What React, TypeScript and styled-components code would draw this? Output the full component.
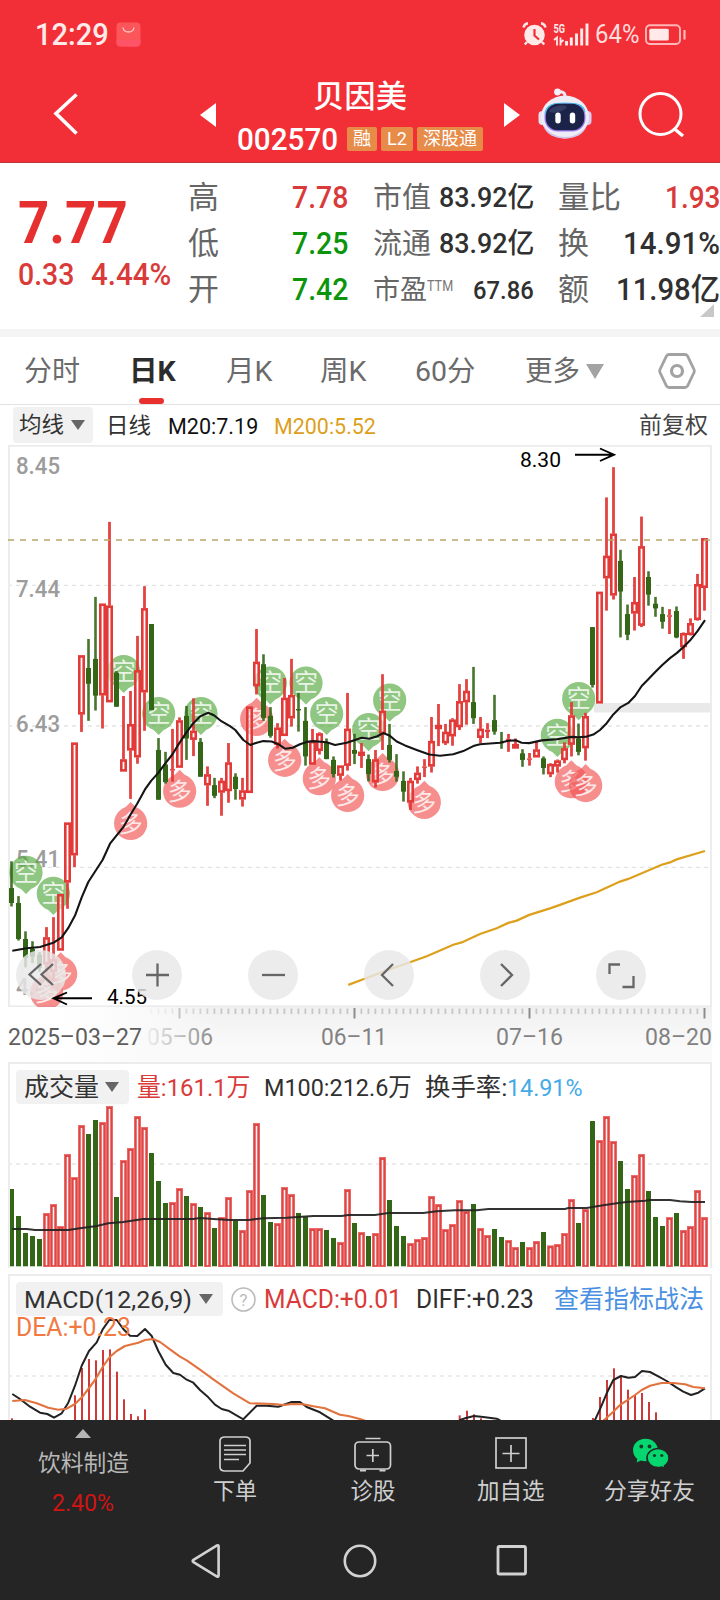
import React, { useLayoutEffect, useRef, useState } from "react";
import styled, { createGlobalStyle, css } from "styled-components";

const RED = "#d93a3a";
const UP = "#e23a38";
const DOWN = "#336617";
const SANS = `Roboto, "Noto Sans CJK SC", sans-serif`;

const Global = createGlobalStyle`
  * { box-sizing: border-box; }
  body { margin: 0; background: #fff; font-family: ${SANS}; color: #333; }
  svg { display: block; }
`;

/* ---------- text that condenses to the width of its slot ---------- */

const Slot = styled.span<{ $w: number; $size: number; $color?: string; $weight?: number; $dy?: number }>`
  display: block;
  flex: none;
  width: ${(p) => p.$w}px;
  font-size: ${(p) => p.$size}px;
  line-height: 1.2;
  font-weight: ${(p) => p.$weight ?? 400};
  color: ${(p) => p.$color ?? "inherit"};
  white-space: nowrap;
  margin-top: ${(p) => p.$dy ?? 0}px;
`;
const Squeeze = styled.span`
  display: inline-block;
  transform-origin: 0 50%;
`;

type FitProps = { w: number; size: number; color?: string; weight?: number; dy?: number; children: React.ReactNode };
function Fit({ w, size, color, weight, dy, children }: FitProps) {
  const ref = useRef<HTMLSpanElement>(null);
  const [k, setK] = useState(1);
  useLayoutEffect(() => {
    if (ref.current && ref.current.offsetWidth) setK(w / ref.current.offsetWidth);
  }, [w, size, children]);
  return (
    <Slot $w={w} $size={size} $color={color} $weight={weight} $dy={dy}>
      <Squeeze ref={ref} style={{ transform: `scaleX(${k})` }}>{children}</Squeeze>
    </Slot>
  );
}

/* ---------- layout parts ---------- */

const Screen = styled.main`
  width: 720px;
  height: 1600px;
  overflow: hidden;
  display: flex;
  flex-direction: column;
  background: #fff;
`;
const Header = styled.header`
  height: 163px;
  flex: none;
  background: #f22f37;
  border-bottom: 1px solid #b8383c;
  color: #fff;
`;
const StatusBar = styled.div`
  height: 68px;
  padding: 1px 33px 0 35px;
  display: flex;
  align-items: center;
  justify-content: space-between;
`;
const Cluster = styled.div<{ $gap: number }>`
  display: flex;
  align-items: center;
  gap: ${(p) => p.$gap}px;
`;
const TitleBar = styled.div`
  height: 94px;
  display: grid;
  grid-template-columns: 200px 34px 254px 16px 34px 54px 46px 46px;
  align-items: start;
`;
const TitleCell = styled.div<{ $top: number; $left?: number }>`
  padding-top: ${(p) => p.$top}px;
  padding-left: ${(p) => p.$left ?? 0}px;
`;
const TitleBlock = styled.div`
  display: flex;
  flex-direction: column;
`;
const NameLine = styled.div`
  padding: 10px 0 0 79px;
  height: 52px;
`;
const CodeLine = styled.div`
  display: flex;
  align-items: center;
  height: 38px;
  padding-left: 3px;
`;
const Tag = styled.span<{ $w: number; $ml: number }>`
  width: ${(p) => p.$w}px;
  margin-left: ${(p) => p.$ml}px;
  height: 24px;
  line-height: 23px;
  text-align: center;
  border-radius: 2px;
  background: #e68b48;
  font-size: 18px;
  white-space: nowrap;
`;

const Quote = styled.section`
  position: relative;
  height: 166px;
  flex: none;
  display: grid;
  grid-template-columns: 188px 160px 25px 161px 24px 162px;
  padding-top: 12px;
`;
const PriceBlock = styled.div`
  padding: 13px 0 0 18px;
`;
const Change = styled.div`
  display: flex;
  gap: 17px;
`;
const StatColumn = styled.div`
  display: flex;
  flex-direction: column;
`;
const StatRow = styled.div`
  height: 46px;
  display: flex;
  align-items: center;
  justify-content: space-between;
`;
const Corner = styled.i`
  position: absolute;
  right: 6px;
  bottom: 12px;
  border-left: 14px solid transparent;
  border-bottom: 13px solid #c8c8c8;
`;
const Band = styled.div`
  height: 8px;
  flex: none;
  background: #f4f4f4;
`;
const Tabs = styled.nav`
  height: 68px;
  flex: none;
  display: flex;
  align-items: center;
  border-bottom: 1px solid #e2e2e2;
`;
const Tab = styled.div<{ $ml: number; $active?: boolean }>`
  position: relative;
  height: 67px;
  margin-left: ${(p) => p.$ml}px;
  padding-top: 1px;
  display: flex;
  align-items: center;
  color: #6b6b6b;
  ${(p) =>
    p.$active &&
    css`
      color: #2c2c2c;
      &::after {
        content: "";
        position: absolute;
        left: 10px;
        bottom: 0;
        width: 25px;
        height: 6px;
        border-radius: 3px;
        background: #e8312f;
      }
    `}
`;
const Caret = styled.i<{ $w: number; $h: number; $ml: number; $color: string }>`
  flex: none;
  margin-left: ${(p) => p.$ml}px;
  border-left: ${(p) => p.$w / 2}px solid transparent;
  border-right: ${(p) => p.$w / 2}px solid transparent;
  border-top: ${(p) => p.$h}px solid ${(p) => p.$color};
`;
const Legend = styled.div<{ $h: number; $left: number }>`
  display: flex;
  align-items: center;
  flex: none;
  height: ${(p) => p.$h}px;
  padding-left: ${(p) => p.$left}px;
`;
const Picker = styled.div<{ $w: number; $h: number; $pl: number }>`
  flex: none;
  display: flex;
  align-items: center;
  width: ${(p) => p.$w}px;
  height: ${(p) => p.$h}px;
  padding-left: ${(p) => p.$pl}px;
  border-radius: 4px;
  background: #f1f1f1;
  color: #333;
`;
const Gap = styled.span<{ $w: number }>`
  flex: none;
  width: ${(p) => p.$w}px;
`;
const ChartBox = styled.section<{ $h: number }>`
  position: relative;
  flex: none;
  height: ${(p) => p.$h}px;
  overflow: hidden;
`;
const Controls = styled.div`
  position: absolute;
  left: 16px;
  bottom: 7px;
  display: flex;
  gap: 66px;
`;
const RoundButton = styled.button`
  width: 50px;
  height: 50px;
  padding: 0;
  border: 0;
  border-radius: 50%;
  background: rgba(232, 232, 232, 0.82);
  display: grid;
  place-items: center;
`;
const Panel = styled.section<{ $h: number; $mt?: number }>`
  position: relative;
  flex: none;
  height: ${(p) => p.$h}px;
  margin: ${(p) => p.$mt ?? 0}px 8px 0;
  border: 2px solid #ececec;
  border-bottom: 0;
  overflow: hidden;
`;
const Plot = styled.div`
  position: absolute;
  inset: -2px 0 0 -10px;
`;
const Above = styled.div`
  position: relative;
`;

const Footer = styled.footer`
  flex: none;
  height: 180px;
  background: #252525;
  color: #cfcfcf;
`;
const Actions = styled.div`
  height: 104px;
  display: grid;
  grid-template-columns: 166px repeat(4, 138px);
`;
const Action = styled.div`
  display: flex;
  flex-direction: column;
  align-items: center;
`;
const ActionIcon = styled.div<{ $top?: number; $left?: number }>`
  height: 58px;
  padding-top: ${(p) => p.$top ?? 14}px;
  padding-left: ${(p) => p.$left ?? 0}px;
`;
const Up = styled.i`
  margin: 9px 0 12px;
  border-left: 8.5px solid transparent;
  border-right: 8.5px solid transparent;
  border-bottom: 9px solid #b5b5b5;
`;
const SystemNav = styled.div`
  height: 76px;
  display: flex;
  align-items: center;
  padding: 0 0 2px 190px;
  gap: 119px;
`;

/* ---------- market data ---------- */

// Level values grow downward from the plot's top edge.
type Candle = [dir: 0 | 1, high: number, top: number, bottom: number, low: number, vol: number];
const candles: Candle[] = [
  [0, 1101, 1171, 1210, 1219, 567], [0, 1192, 1210, 1304, 1308, 648], [0, 1284, 1304, 1354, 1378, 699],
  [0, 1310, 1330, 1350, 1367, 708], [0, 1338, 1345, 1380, 1390, 717], [1, 1273, 1300, 1370, 1390, 640],
  [1, 1247, 1357, 1390, 1412, 613], [1, 1187, 1187, 1334, 1334, 679], [1, 1000, 1000, 1156, 1225, 463],
  [1, 791, 791, 1085, 1116, 532], [1, 563, 563, 717, 763, 376], [0, 520, 596, 637, 734, 402],
  [0, 410, 572, 668, 707, 360], [1, 428, 428, 667, 754, 367], [1, 214, 433, 685, 685, 319],
  [0, 604, 608, 697, 697, 591], [1, 669, 835, 866, 866, 481], [1, 656, 743, 811, 938, 445],
  [1, 512, 602, 829, 846, 349], [1, 382, 440, 659, 760, 382], [0, 481, 481, 706, 706, 459],
  [0, 779, 810, 940, 940, 543], [0, 815, 848, 894, 898, 609], [1, 755, 860, 863, 893, 607],
  [1, 725, 733, 856, 856, 565], [0, 695, 721, 780, 836, 588], [1, 675, 760, 783, 826, 610],
  [0, 779, 789, 880, 880, 621], [1, 853, 874, 902, 956, 637], [0, 883, 902, 930, 936, 684],
  [1, 883, 891, 921, 982, 652], [1, 792, 843, 917, 948, 592], [0, 871, 880, 912, 940, 663],
  [1, 883, 916, 939, 958, 691], [1, 697, 697, 922, 922, 571], [1, 494, 580, 643, 665, 370],
  [0, 560, 586, 726, 734, 585], [0, 698, 721, 773, 778, 666], [1, 740, 752, 796, 806, 670],
  [1, 622, 674, 773, 773, 562], [1, 572, 667, 727, 749, 583], [0, 661, 703, 706, 762, 639],
  [0, 698, 734, 827, 851, 651], [1, 755, 787, 848, 848, 685], [1, 764, 767, 812, 822, 685],
  [0, 780, 789, 834, 834, 690], [0, 827, 836, 873, 882, 714], [1, 851, 851, 877, 890, 727],
  [1, 661, 755, 851, 864, 568], [0, 768, 810, 820, 847, 669], [1, 792, 815, 825, 857, 697],
  [0, 822, 834, 873, 892, 708], [1, 810, 835, 894, 908, 700], [1, 612, 708, 768, 810, 472],
  [0, 742, 797, 836, 843, 600], [0, 821, 865, 880, 893, 678], [0, 866, 891, 919, 945, 708],
  [1, 883, 891, 947, 967, 730], [1, 853, 870, 888, 898, 718], [1, 834, 853, 855, 881, 712],
  [1, 724, 787, 853, 869, 589], [1, 690, 745, 755, 800, 613], [1, 742, 763, 792, 797, 688],
  [1, 727, 731, 774, 799, 673], [1, 638, 683, 750, 758, 601], [1, 625, 656, 685, 744, 634],
  [0, 593, 685, 727, 742, 612], [1, 724, 755, 778, 792, 685], [1, 740, 757, 763, 779, 706],
  [0, 666, 732, 762, 770, 687], [0, 763, 789, 791, 807, 711], [1, 768, 781, 786, 815, 721],
  [1, 780, 795, 806, 806, 742], [0, 808, 819, 836, 854, 726], [1, 818, 832, 835, 851, 742],
  [1, 789, 809, 829, 829, 724], [0, 827, 832, 857, 874, 696], [1, 845, 847, 873, 881, 737],
  [1, 835, 838, 853, 869, 733], [1, 790, 806, 836, 845, 700], [1, 685, 720, 796, 827, 598],
  [0, 741, 780, 815, 824, 669], [1, 713, 722, 805, 838, 628], [0, 489, 489, 640, 647, 363],
  [1, 397, 397, 688, 688, 421], [1, 150, 303, 361, 446, 349], [1, 71, 245, 406, 417, 424],
  [0, 287, 316, 396, 516, 483], [0, 430, 455, 509, 523, 567], [1, 358, 424, 453, 498, 526],
  [1, 200, 278, 485, 489, 463], [0, 343, 358, 404, 433, 573], [0, 410, 428, 440, 462, 651],
  [0, 436, 455, 475, 493, 678], [1, 442, 458, 462, 507, 652], [0, 435, 447, 516, 518, 639],
  [1, 503, 505, 541, 572, 691], [1, 466, 479, 509, 511, 679], [1, 350, 377, 470, 472, 571],
  [1, 257, 257, 386, 446, 652],
];

const ma20 = [
  37,1335, 80,1328, 120,1325, 160,1314, 185,1300, 205,1275, 225,1243, 245,1195, 265,1155, 308,1097, 330,1055,
  370,1012, 391,980, 412,950, 435,913, 454,890, 475,870, 496,845, 517,822, 538,792, 559,765, 580,740, 601,722,
  625,713, 643,720, 664,735, 690,748, 706,758, 730,784, 751,797, 770,791, 790,787, 815,788, 835,795, 856,807,
  878,804, 900,795, 920,789, 940,787, 980,790, 1005,797, 1040,791, 1085,778, 1108,781, 1132,774, 1150,766,
  1168,772, 1190,788, 1215,798, 1250,810, 1288,822, 1320,825, 1360,821, 1390,813, 1420,800, 1440,795, 1500,791,
  1525,786, 1548,785, 1565,791, 1588,792, 1625,785, 1670,782, 1715,776, 1735,777, 1760,775, 1780,770, 1800,758,
  1820,740, 1840,717, 1862,698, 1885,687, 1905,669, 1925,643, 1945,625, 1965,607, 1987,588, 2010,570, 2030,557,
  2052,540, 2072,522, 2092,500, 2115,471,
];
const ma200 = [
  1045,1424, 1090,1409, 1160,1386, 1230,1365, 1280,1349, 1360,1319, 1385,1313, 1440,1291, 1490,1276, 1525,1262,
  1550,1256, 1588,1241, 1650,1224, 1680,1215, 1740,1196, 1790,1182, 1860,1154, 1885,1147, 1985,1110, 2010,1104,
  2030,1096, 2115,1074,
];
const volMa = [
  37,687, 80,687, 105,690, 205,690, 240,685, 290,678, 325,670, 370,666, 430,657, 580,657, 600,654, 640,657,
  690,660, 745,660, 790,655, 860,653, 905,650, 940,648, 1025,648, 1045,645, 1125,645, 1165,639, 1270,639,
  1310,634, 1365,631, 1430,631, 1465,627, 1695,627, 1705,624, 1760,624, 1800,617, 1850,610, 1880,606, 1935,602,
  1950,600, 2010,600, 2040,604, 2075,606, 2115,606,
];
const diff = [
  37,387, 60,402, 90,425, 120,443, 142,447, 162,458, 185,445, 205,413, 225,362, 245,302, 267,258, 290,232,
  308,193, 328,165, 350,165, 370,192, 390,212, 412,213, 435,192, 455,213, 475,258, 497,299, 520,324, 540,329,
  560,344, 580,353, 600,375, 625,397, 645,419, 665,432, 685,437, 730,463, 770,422, 800,422, 835,425, 875,411,
  900,411, 920,426, 960,442, 1000,467, 1050,500, 1360,500, 1380,465, 1398,459, 1422,453, 1450,456, 1490,461,
  1500,466, 1530,500, 1770,500, 1785,465, 1802,428, 1820,385, 1840,345, 1863,333, 1885,338, 1905,336, 1926,318,
  1950,321, 1975,334, 2000,348, 2030,368, 2050,380, 2073,390, 2095,383, 2115,370,
];
const dea = [
  37,408, 75,405, 110,415, 145,428, 175,434, 200,431, 225,417, 250,392, 285,345, 310,303, 330,275, 350,258,
  375,243, 415,233, 435,225, 460,222, 480,231, 510,253, 540,275, 560,286, 600,314, 640,343, 700,385, 750,415,
  820,417, 850,420, 880,417, 910,418, 940,424, 975,430, 1020,449, 1045,453, 1080,462, 1095,467, 1150,500,
  1780,500, 1810,467, 1840,440, 1860,420, 1880,407, 1905,390, 1925,375, 1950,362, 1985,354, 2020,354, 2055,358,
  2080,366, 2115,370,
];
const macdBars = [
  36,460, 225,391, 246,309, 267,282, 288,286, 309,255, 330,253, 351,320, 372,403, 393,447, 414,454, 435,433,
  1379,451, 1401,437, 1422,448, 1443,460, 1779,459, 1800,396, 1821,345, 1842,310, 1863,331, 1884,374, 1905,390,
  1926,384, 1947,411, 1968,442,
];
const shorts = [78,1130, 160,1185, 371,605, 476,715, 603,715, 811,635, 918,635, 980,715, 1106,757, 1169,680, 1672,772, 1736,676];
const longs = [140,1445, 182,1395, 392,1002, 539,918, 770,730, 854,837, 958,885, 1043,929, 1148,874, 1273,947, 1714,893, 1757,903];

const barX = (i: number) => 11.5 + 7 * i;
const level = (v: number) => v * 0.38265 - 5;
const third = (offset: number) => (v: number) => v / 3 - offset;
const pairs = (flat: number[]) =>
  Array.from({ length: flat.length / 2 }, (_, i) => [flat[i * 2], flat[i * 2 + 1]] as const);
const trace = (flat: number[], y: (v: number) => number) =>
  pairs(flat).map(([px, py]) => `${(px / 3).toFixed(1)},${y(py).toFixed(1)}`).join(" ");

/* ---------- charts ---------- */

function Pin({ x, y, kind }: { x: number; y: number; kind: "long" | "short" }) {
  const s = kind === "short" ? 1 : -1;
  return (
    <g transform={`translate(${x} ${y})`}>
      <path
        d={`M-16.6 0A16.6 16.6 0 0 ${s > 0 ? 1 : 0} 16.6 0C16.6 ${s * 10} 9 ${s * 15} 5 ${s * 16.5}L0 ${s * 21.5}L-5 ${s * 16.5}C-9 ${s * 15} -16.6 ${s * 10} -16.6 0Z`}
        fill={kind === "short" ? "#55a93f" : "#f25454"}
        opacity={0.66}
      />
      <text y={8.5} textAnchor="middle" fontSize={24} fill="#fff" opacity={0.8} fontFamily='"Noto Sans CJK SC", sans-serif'>
        {kind === "short" ? "空" : "多"}
      </text>
    </g>
  );
}

function PriceChart() {
  const prices: [string, number][] = [["8.45", 466], ["7.44", 589], ["6.43", 724], ["5.41", 859], ["4.40", 987]];
  return (
    <svg width={720} height={562} viewBox="0 0 720 562" fontFamily="Roboto, sans-serif">
      {[585.4, 726, 867.4].map((y) => (
        <line key={y} x1={8} x2={711} y1={y - 445} y2={y - 445} stroke="#e3e3e3" strokeWidth={1.3} strokeDasharray="4 4" />
      ))}
      <rect x={594} y={258} width={118} height={9.5} fill="#e9e9e9" />
      <rect x={9} y={0.8} width={702} height={560.5} fill="none" stroke="#ebebeb" strokeWidth={1.8} />
      {prices.map(([t, y]) => (
        <text key={t} x={16} y={y - 445 + 8} fontSize={23.5} fontWeight={500} fill="#9c9c9c" textLength={44} lengthAdjust="spacingAndGlyphs">{t}</text>
      ))}
      {pairs(shorts).map(([x, y]) => <Pin key={x} kind="short" x={x / 3} y={level(y)} />)}
      {pairs(longs).map(([x, y]) => <Pin key={x} kind="long" x={x / 3} y={level(y)} />)}
      {candles.map(([up, high, top, bottom, low], i) => {
        const x = barX(i);
        const h = Math.max((bottom - top) * 0.38265, 1.4);
        return up ? (
          <g key={i} stroke={UP}>
            <line x1={x} x2={x} y1={level(high)} y2={level(top)} strokeWidth={2.8} opacity={0.95} />
            <line x1={x} x2={x} y1={level(bottom)} y2={level(low)} strokeWidth={2.8} opacity={0.95} />
            {h < 3 ? (
              <rect x={x - 2.5} y={level(top)} width={5} height={h} fill={UP} stroke="none" />
            ) : (
              <rect x={x - 2.2} y={level(top) + 1} width={4.4} height={Math.max(h - 2, 1)} fill="#fff" fillOpacity={0.55} strokeWidth={2.6} />
            )}
          </g>
        ) : (
          <g key={i} fill={DOWN}>
            <rect x={x - 1.3} y={level(high)} width={2.6} height={(low - high) * 0.38265} opacity={0.9} />
            <rect x={x - 2.5} y={level(top)} width={5} height={h} />
          </g>
        );
      })}
      <line x1={8} x2={711} y1={95} y2={95} stroke="#bba66c" strokeWidth={1.7} strokeDasharray="6 6" />
      <polyline points={trace(ma200, level)} fill="none" stroke="#dda01c" strokeWidth={2.2} />
      <polyline points={trace(ma20, level)} fill="none" stroke="#151515" strokeWidth={2.1} strokeLinejoin="round" />
      <g fill="#000">
        <text x={520} y={21.5} fontSize={19.5} textLength={41} lengthAdjust="spacingAndGlyphs">8.30</text>
        <text x={107} y={558.5} fontSize={19.5} textLength={40} lengthAdjust="spacingAndGlyphs">4.55</text>
      </g>
      <g fill="none" stroke="#000" strokeWidth={1.9}>
        <path d="M575 9.7H613M600 3.5L614 9.7L600 16" />
        <path d="M92 553.3H54M67 547.5L53.5 553.3L67 559.5" />
      </g>
    </svg>
  );
}

const controlPaths = [
  "M25 14L13.5 24.5L25 35M37 14L25.5 24.5L37 35",
  "M14 25H37M25.5 13.5V36.5",
  "M14 25H37",
  "M29 14L18 25L29 36",
  "M21 14L32 25L21 36",
  "M13.5 24V14.5H24M37.5 26V37H26.5",
];

const AxisStrip = styled.div`
  position: relative;
  flex: none;
  height: 55px;
  margin: 0 8px;
  background: linear-gradient(#f0f0f0, #fafafa 75%);
`;
const AxisFade = styled.div`
  position: absolute;
  inset: 0 auto 0 0;
  width: 240px;
  background: linear-gradient(90deg, #fff 20%, rgba(250, 250, 250, 0.96) 56%, rgba(250, 250, 250, 0) 88%);
`;
const AxisSvg = styled.svg`
  position: absolute;
  inset: 0 auto auto -8px;
`;

const dateStops: [string, number, number][] = [["05–06", 147, 66], ["06–11", 321, 66], ["07–16", 496, 67], ["08–20", 645, 67]];
function Axis() {
  return (
    <AxisStrip>
      <AxisSvg width={720} height={55} fontFamily="Roboto, sans-serif">
        {Array.from({ length: 80 }, (_, k) => k + 20).map((i) => {
          const major = i % 25 === 24;
          return <rect key={i} x={barX(i) - 1} y={major ? 1 : 1.5} width={major ? 2 : 1.8} height={major ? 10.5 : 5.5} fill={major ? "#8c8c8c" : "#c6c6c6"} />;
        })}
        {dateStops.map(([t, x, w]) => (
          <text key={t} x={x} y={38} fontSize={24.5} fill="#828282" textLength={w} lengthAdjust="spacingAndGlyphs">{t}</text>
        ))}
      </AxisSvg>
      <AxisFade />
      <AxisSvg width={720} height={55} fontFamily="Roboto, sans-serif">
        <text x={8} y={38} fontSize={24.5} fill="#5e5e5e" textLength={134} lengthAdjust="spacingAndGlyphs">2025–03–27</text>
      </AxisSvg>
    </AxisStrip>
  );
}

function VolumeChart() {
  const y = third(62);
  return (
    <svg width={720} height={206} viewBox="0 0 720 206">
      <line x1={8} x2={711} y1={102} y2={102} stroke="#e6e6e6" strokeWidth={1.5} strokeDasharray="4 4" />
      {candles.map((c, i) => {
        const x = barX(i);
        const top = y(c[5]);
        return c[0] ? (
          <g key={i}>
            <rect x={x - 3.5} y={top - 0.3} width={7} height={205.3 - top} fill="#ee6a68" />
            <rect x={x - 2.6} y={top + 0.7} width={5.2} height={203.6 - top} fill="#dc4646" />
            <rect x={x - 0.8} y={top + 2.6} width={1.6} height={Math.max(200.6 - top, 1)} fill="#fff0f0" />
          </g>
        ) : (
          <rect key={i} x={x - 2.5} y={top} width={5} height={204.3 - top} fill={DOWN} />
        );
      })}
      <polyline points={trace(volMa, y)} fill="none" stroke="#222" strokeWidth={2} opacity={0.92} />
    </svg>
  );
}

function MacdChart() {
  const y = third(9);
  return (
    <svg width={720} height={146} viewBox="0 0 720 146">
      <line x1={8} x2={711} y1={102} y2={102} stroke="#e6e6e6" strokeWidth={1.5} strokeDasharray="4 4" />
      {pairs(macdBars).map(([x, top]) => (
        <rect key={x} x={x / 3 - 1} y={y(top)} width={2} height={180} fill="#cc3a3a" />
      ))}
      <polyline points={trace(diff, y)} fill="none" stroke="#222" strokeWidth={2} strokeLinejoin="round" />
      <polyline points={trace(dea, y)} fill="none" stroke="#e2733f" strokeWidth={2.1} strokeLinejoin="round" />
    </svg>
  );
}

/* ---------- icons ---------- */

const BagIcon = () => (
  <svg width={25} height={25} viewBox="0 0 25 25">
    <rect x={0.5} y={0.5} width={24} height={24} rx={4} fill="#fb575b" />
    <path d="M0.5 18H24.5V20.5a4 4 0 0 1-4 4h-16a4 4 0 0 1-4-4Z" fill="#ff5368" />
    <path d="M7 5.5c.8 6 10.2 6 11 0" fill="none" stroke="#ffc9c9" strokeWidth={1.3} />
  </svg>
);
const AlarmIcon = () => (
  <svg width={25} height={25} viewBox="0 0 25 25">
    <circle cx={12.5} cy={13} r={10.3} fill="#ffe9e9" />
    <path d="M1.5 5.5C2 3.5 4 1.5 6 1.3M23.5 5.5C23 3.5 21 1.5 19 1.3M5 20L2.8 22.5M20 20L22.2 22.5" stroke="#ffe9e9" strokeWidth={2.4} fill="none" />
    <path d="M12.5 7V13.5L17 17.5" fill="none" stroke="#f22f37" strokeWidth={2.2} />
  </svg>
);
const SignalIcon = () => (
  <svg width={36} height={26} viewBox="0 0 36 26">
    <text x={0.5} y={11} fontSize={12.5} fontWeight={700} fill="#ffe9e9" fontFamily="Roboto, sans-serif" textLength={11.5} lengthAdjust="spacingAndGlyphs">5G</text>
    <path d="M1 18L4 15.5V23.5M10.5 18L7.5 20.5M7.5 15.5V23.5" stroke="#ffe9e9" strokeWidth={1.8} fill="none" />
    <path d="M13.5 19V23.5M18.3 15.5V23.5M23.5 11.5V23.5M28.7 6.5V23.5M34 1.5V23.5" stroke="#ffe9e9" strokeWidth={2.9} />
  </svg>
);
const BatteryIcon = () => (
  <svg width={42} height={22} viewBox="0 0 42 22">
    <rect x={1} y={1.3} width={34} height={18.7} rx={4} fill="none" stroke="#ffb6b8" strokeWidth={1.9} />
    <rect x={4.3} y={4.8} width={19.5} height={11.8} rx={1.5} fill="#ffe9e9" />
    <path d="M39.5 6V15.5" stroke="#ffb6b8" strokeWidth={2.2} />
  </svg>
);
const RobotIcon = () => (
  <svg width={54} height={52} viewBox="0 0 54 52">
    <path d="M27 9C27.5 4.5 24 3.2 20 4" fill="none" stroke="#ece9f6" strokeWidth={3} />
    <circle cx={19.5} cy={4} r={3.4} fill="#f3f0fa" />
    <rect x={0.5} y={23} width={8} height={14} rx={4} fill="#e6e2f4" />
    <rect x={45.5} y={23} width={8} height={14} rx={4} fill="#d9cdf2" />
    <ellipse cx={27} cy={29} rx={24} ry={21.5} fill="#eeecf6" />
    <path d="M5 36C10 46 20 49 27 49S45 46 49 36C47 47 36 50.5 27 50.5S7 47 5 36Z" fill="#cfc4ea" />
    <rect x={6.5} y={15} width={41} height={28.5} rx={13} fill="#9b7df0" />
    <path d="M7 26C8 17 15 15 27 15s19 2 20 9" fill="none" stroke="#4cc6ea" strokeWidth={1.2} />
    <rect x={7.8} y={15.8} width={38.5} height={26.5} rx={12} fill="#1c2348" />
    <ellipse cx={20} cy={21} rx={9} ry={3} fill="#3c466c" opacity={0.7} transform="rotate(-14 20 21)" />
    <rect x={17.3} y={24.5} width={5.4} height={11} rx={2.7} fill="#fff" />
    <rect x={31.8} y={24.5} width={5.4} height={11} rx={2.7} fill="#fff" />
  </svg>
);
const WeChatIcon = () => (
  <svg width={38} height={32} viewBox="0 0 38 32">
    <path d="M13.5 0.8C6 .8 1 6 1 12.3c0 3.6 1.7 6.6 4.4 8.7L4.6 24.5l4.3-2c4 1.2 9.5.8 12.6-2.3C25 16.5 26 14 26 12 25.5 5.5 20.5.8 13.5.8Z" fill="#06d66f" />
    <circle cx={9.3} cy={8.5} r={1.9} fill="#1c3a28" />
    <circle cx={17.5} cy={8.5} r={1.9} fill="#1c3a28" />
    <path d="M26 10.5c-6 0-11 4.2-11 9.5s5 9.6 11 9.6c1.4 0 2.7-.2 3.9-.6l3.3 1.5-.7-2.7C35.2 26 37 23.2 37 20c0-5.3-5-9.5-11-9.5Z" fill="#06d66f" stroke="#252525" strokeWidth={1.6} />
    <circle cx={22.5} cy={17.5} r={1.6} fill="#1c3a28" />
    <circle cx={29.8} cy={17.5} r={1.6} fill="#1c3a28" />
  </svg>
);

/* ---------- screen ---------- */

export default function App() {
  return (
    <>
      <Global />
      <Screen>
        <Header>
          <StatusBar>
            <Cluster $gap={7}>
              <Fit w={74} size={31} weight={500} color="#ffeaea">12:29</Fit>
              <BagIcon />
            </Cluster>
            <Cluster $gap={6}>
              <AlarmIcon />
              <SignalIcon />
              <Fit w={44} size={25} color="#ffdcdc">64%</Fit>
              <BatteryIcon />
            </Cluster>
          </StatusBar>
          <TitleBar>
            <TitleCell $top={24} $left={51}>
              <svg width={28} height={44}><path d="M25.5 2.5L5 21.5L25.5 41.5" fill="none" stroke="#fff" strokeWidth={3.6} /></svg>
            </TitleCell>
            <TitleCell $top={35}>
              <svg width={16} height={24}><path d="M16 0V24L0 12Z" fill="#fff" /></svg>
            </TitleCell>
            <TitleBlock>
              <NameLine><Fit w={94} size={31} weight={500}>贝因美</Fit></NameLine>
              <CodeLine>
                <Fit w={101} size={32} weight={500} dy={1}>002570</Fit>
                <Tag $w={30} $ml={9}>融</Tag>
                <Tag $w={32} $ml={4}>L2</Tag>
                <Tag $w={66} $ml={4}>深股通</Tag>
              </CodeLine>
            </TitleBlock>
            <TitleCell $top={35} $left={16}>
              <svg width={16} height={24}><path d="M0 0V24L16 12Z" fill="#fff" /></svg>
            </TitleCell>
            <span />
            <TitleCell $top={20}><RobotIcon /></TitleCell>
            <TitleCell $top={22} $left={46}>
              <svg width={50} height={50}>
                <circle cx={22.5} cy={24} r={20.5} fill="none" stroke="#fff" strokeWidth={3} />
                <path d="M36 38.5L45 46" stroke="#fff" strokeWidth={3.4} />
              </svg>
            </TitleCell>
          </TitleBar>
        </Header>

        <Quote>
          <PriceBlock>
            <Fit w={110} size={60} weight={700} color="#e6302f" dy={-1}>7.77</Fit>
            <Change>
              <Fit w={56} size={31} color={RED} weight={500} dy={-3}>0.33</Fit>
              <Fit w={80} size={31} color={RED} weight={500} dy={-3}>4.44%</Fit>
            </Change>
          </PriceBlock>
          <StatColumn>
            {[["高", "7.78", RED], ["低", "7.25", "#0c950c"], ["开", "7.42", "#0c950c"]].map(([k, v, c]) => (
              <StatRow key={k}>
                <Fit w={31} size={31} color="#666">{k}</Fit>
                <Fit w={56} size={31} color={c} weight={500}>{v}</Fit>
              </StatRow>
            ))}
          </StatColumn>
          <span />
          <StatColumn>
            <StatRow><Fit w={58} size={29} color="#666">市值</Fit><Fit w={95} size={28} weight={500} color="#303030">83.92亿</Fit></StatRow>
            <StatRow><Fit w={58} size={29} color="#666">流通</Fit><Fit w={95} size={28} weight={500} color="#303030">83.92亿</Fit></StatRow>
            <StatRow>
              <Cluster $gap={0}><Fit w={54} size={27} color="#666">市盈</Fit><Fit w={26} size={15.5} color="#777" dy={-8}>TTM</Fit></Cluster>
              <Fit w={61} size={26.5} weight={500} color="#303030">67.86</Fit>
            </StatRow>
          </StatColumn>
          <span />
          <StatColumn>
            <StatRow><Fit w={63} size={31} color="#666">量比</Fit><Fit w={55} size={31} weight={500} color={RED}>1.93</Fit></StatRow>
            <StatRow><Fit w={31} size={31} color="#666">换</Fit><Fit w={97} size={31} weight={500} color="#303030">14.91%</Fit></StatRow>
            <StatRow><Fit w={31} size={31} color="#666">额</Fit><Fit w={104} size={31} weight={500} color="#303030">11.98亿</Fit></StatRow>
          </StatColumn>
          <Corner />
        </Quote>
        <Band />

        <Tabs>
          <Tab $ml={24}><Fit w={56} size={28} dy={1}>分时</Fit></Tab>
          <Tab $ml={49} $active><Fit w={47} size={28} weight={700} dy={1}>日K</Fit></Tab>
          <Tab $ml={50}><Fit w={47} size={28} dy={1}>月K</Fit></Tab>
          <Tab $ml={47}><Fit w={47} size={28} dy={1}>周K</Fit></Tab>
          <Tab $ml={48}><Fit w={60} size={28} dy={1}>60分</Fit></Tab>
          <Tab $ml={50}><Fit w={55} size={28} dy={1}>更多</Fit><Caret $w={18} $h={15} $ml={6} $color="#a3a3a3" /></Tab>
          <Tab $ml={54}>
            <svg width={38} height={38} fill="none" stroke="#a2a2a2">
              <path d="M11 2.5H27Q28.5 2.5 29.5 4L36 17.5Q36.6 19 36 20.5L29.5 34Q28.5 35.5 27 35.5H11Q9.5 35.5 8.5 34L2 20.5Q1.4 19 2 17.5L8.5 4Q9.5 2.5 11 2.5Z" strokeWidth={2.8} />
              <circle cx={19} cy={19} r={5.5} strokeWidth={3.2} />
            </svg>
          </Tab>
        </Tabs>

        <Legend $h={40} $left={13}>
          <Picker $w={80} $h={36} $pl={6}>
            <Fit w={45} size={22} dy={1}>均线</Fit><Caret $w={14} $h={10} $ml={7} $color="#666" />
          </Picker>
          <Gap $w={13} /><Fit w={45} size={22} dy={2}>日线</Fit>
          <Gap $w={17} /><Fit w={90} size={22.5} color="#111" dy={2}>M20:7.19</Fit>
          <Gap $w={16} /><Fit w={102} size={22.5} color="#dda01c" dy={2}>M200:5.52</Fit>
          <Gap $w={263} /><Fit w={69} size={23} color="#444" dy={2}>前复权</Fit>
        </Legend>

        <ChartBox $h={562}>
          <PriceChart />
          <Controls>
            {controlPaths.map((d) => (
              <RoundButton key={d}><svg width={50} height={50}><path d={d} fill="none" stroke="#666" strokeWidth={2.3} /></svg></RoundButton>
            ))}
          </Controls>
        </ChartBox>
        <Axis />

        <Panel $h={206}>
          <Plot><VolumeChart /></Plot>
          <Above>
            <Legend $h={46} $left={6}>
              <Picker $w={113} $h={34} $pl={8}>
                <Fit w={75} size={25} dy={1}>成交量</Fit><Caret $w={14} $h={10} $ml={6} $color="#666" />
              </Picker>
              <Gap $w={8} /><Fit w={113} size={24.5} color={RED} dy={1}>量:161.1万</Fit>
              <Gap $w={14} /><Fit w={148} size={24.5} color="#303030" dy={1}>M100:212.6万</Fit>
              <Gap $w={13} /><Fit w={82} size={24.5} color="#303030" dy={1}>换手率:</Fit>
              <Fit w={75} size={24.5} color="#43aae6" dy={1}>14.91%</Fit>
            </Legend>
          </Above>
        </Panel>

        <Panel $h={146} $mt={6}>
          <Plot><MacdChart /></Plot>
          <Above>
            <Legend $h={46} $left={6}>
              <Picker $w={207} $h={34} $pl={8}>
                <Fit w={168} size={24.5} dy={1}>MACD(12,26,9)</Fit><Caret $w={14} $h={10} $ml={7} $color="#666" />
              </Picker>
              <Gap $w={8} />
              <svg width={25} height={25} viewBox="0 0 25 25">
                <circle cx={12.5} cy={12.5} r={11.5} fill="none" stroke="#bbb" strokeWidth={1.6} />
                <text x={12.5} y={18.5} textAnchor="middle" fontSize={17} fill="#bbb" fontFamily="Roboto, sans-serif">?</text>
              </svg>
              <Gap $w={8} /><Fit w={138} size={25} color={RED} dy={1}>MACD:+0.01</Fit>
              <Gap $w={14} /><Fit w={118} size={25} color="#303030" dy={1}>DIFF:+0.23</Fit>
              <Gap $w={20} /><Fit w={150} size={25.5} color="#4a90e2" dy={1}>查看指标战法</Fit>
            </Legend>
            <Legend $h={12} $left={6}><Fit w={115} size={25} color="#f07a42">DEA:+0.23</Fit></Legend>
          </Above>
        </Panel>

        <Footer>
          <Actions>
            <Action>
              <Up />
              <Fit w={91} size={22.5} color="#b8b8b8">饮料制造</Fit>
              <Fit w={62} size={23.5} color="#d01414" dy={12}>2.40%</Fit>
            </Action>
            <Action>
              <ActionIcon>
                <svg width={34} height={40} fill="none" stroke="#cfcfcf" strokeWidth={1.7}>
                  <path d="M7 3H27Q32 3 32 7V29L25 37H7Q2 37 2 33V7Q2 3 7 3Z" />
                  <path d="M6 11.5H28M6 16H28M6 20.5H28M6 25.5H21" />
                </svg>
              </ActionIcon>
              <Fit w={44} size={22.5}>下单</Fit>
            </Action>
            <Action>
              <ActionIcon>
                <svg width={40} height={40} fill="none" stroke="#cfcfcf" strokeWidth={1.7}>
                  <rect x={2} y={8} width={35.5} height={27} rx={4} />
                  <path d="M12.5 4.5H27.5M13.5 21.5H26M19.8 15V28" />
                  <path d="M7 36.5H13M26.5 36.5H32.5" strokeWidth={2} />
                </svg>
              </ActionIcon>
              <Fit w={45} size={22.5}>诊股</Fit>
            </Action>
            <Action>
              <ActionIcon>
                <svg width={34} height={40} fill="none" stroke="#cfcfcf" strokeWidth={1.7}>
                  <rect x={2} y={4} width={30} height={30} />
                  <path d="M8.5 19.5H25.5M17 11V28" />
                </svg>
              </ActionIcon>
              <Fit w={68} size={22.5}>加自选</Fit>
            </Action>
            <Action>
              <ActionIcon $top={18} $left={3}><WeChatIcon /></ActionIcon>
              <Fit w={91} size={22.5}>分享好友</Fit>
            </Action>
          </Actions>
          <SystemNav>
            <svg width={32} height={36} fill="none" stroke="#d2d2d2" strokeWidth={2.6}><path d="M27 2.5Q28.6 1.8 28.6 3.5V32.5Q28.6 34.2 27 33.5L3.5 19.2Q1.8 18 3.5 16.8Z" /></svg>
            <svg width={36} height={36} fill="none" stroke="#d2d2d2" strokeWidth={2.6}><circle cx={19} cy={18} r={15.2} /></svg>
            <svg width={32} height={36} fill="none" stroke="#d2d2d2" strokeWidth={2.8}><rect x={2} y={3.5} width={27.5} height={27.5} rx={1.5} /></svg>
          </SystemNav>
        </Footer>
      </Screen>
    </>
  );
}
